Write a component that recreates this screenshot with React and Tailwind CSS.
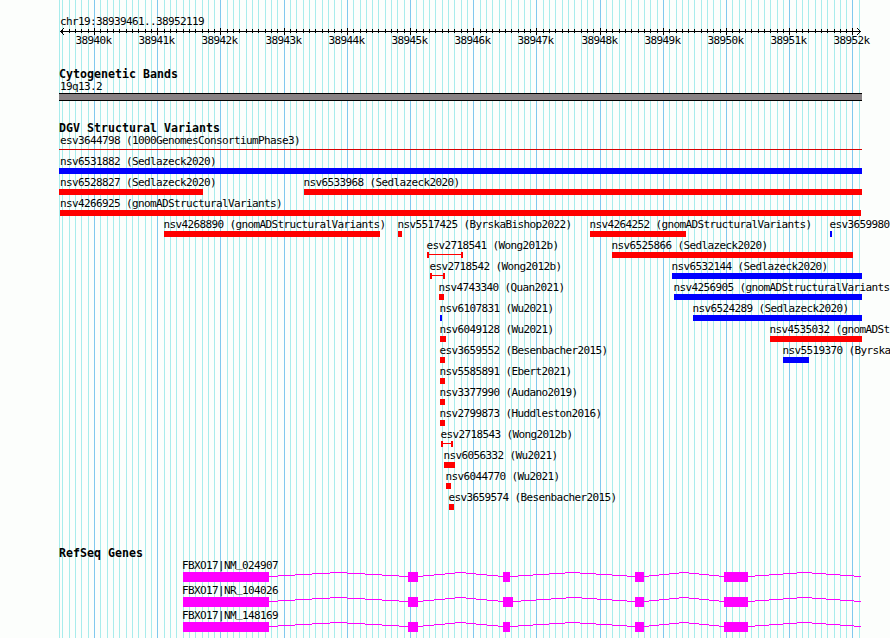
const RED = '#ff0000'
const BLUE = '#0000ff'
const MAGENTA = '#ff00ff'

const REGION = { chrom: 'chr19', start: 38939461, end: 38952119 }
const PX_PER_BP = 0.0632
const LEFT = 59
const RIGHT = 862

const toX = (bp) => Math.round(60 + (bp - REGION.start) * PX_PER_BP)

// one mark every 100 bp, major every 1000 bp
const marks = []
for (let bp = 38939500; bp <= REGION.end; bp += 100) {
  marks.push({ bp, x: toX(bp), major: bp % 1000 === 0 })
}

// each row: [label, start, end, color, label x, kind]
const variantRows = [
  [['esv3644798 (1000GenomesConsortiumPhase3)', 59, 862, '#d80000', 60, 'line']],
  [['nsv6531882 (Sedlazeck2020)', 59, 862, BLUE, 60]],
  [
    ['nsv6528827 (Sedlazeck2020)', 59, 203, RED, 60],
    ['nsv6533968 (Sedlazeck2020)', 304, 862, RED, 303.4]
  ],
  [['nsv4266925 (gnomADStructuralVariants)', 60, 861, RED, 60]],
  [
    ['nsv4268890 (gnomADStructuralVariants)', 164, 380, RED, 163.4],
    ['nsv5517425 (ByrskaBishop2022)', 398, 402, RED, 397.4],
    ['nsv4264252 (gnomADStructuralVariants)', 590, 686, RED, 589.4],
    ['esv3659980', 830, 832, BLUE, 829.4]
  ],
  [
    ['esv2718541 (Wong2012b)', 427, 463, RED, 426.4, 'span'],
    ['nsv6525866 (Sedlazeck2020)', 612, 853, RED, 611.4]
  ],
  [
    ['esv2718542 (Wong2012b)', 430, 445, RED, 429.4, 'span'],
    ['nsv6532144 (Sedlazeck2020)', 672, 862, BLUE, 671.4]
  ],
  [
    ['nsv4743340 (Quan2021)', 439, 444, RED, 438.4],
    ['nsv4256905 (gnomADStructuralVariants)', 674, 862, BLUE, 673.4]
  ],
  [
    ['nsv6107831 (Wu2021)', 440, 442, BLUE, 439.4],
    ['nsv6524289 (Sedlazeck2020)', 693, 862, BLUE, 692.4]
  ],
  [
    ['nsv6049128 (Wu2021)', 440, 446, RED, 439.4],
    ['nsv4535032 (gnomADStructuralVariants)', 770, 862, RED, 769.4]
  ],
  [
    ['esv3659552 (Besenbacher2015)', 440, 445, RED, 439.4],
    ['nsv5519370 (ByrskaBishop2022)', 783, 809, BLUE, 782.4]
  ],
  [['nsv5585891 (Ebert2021)', 440, 445, RED, 439.4]],
  [['nsv3377990 (Audano2019)', 440, 445, RED, 439.4]],
  [['nsv2799873 (Huddleston2016)', 440, 445, RED, 439.4]],
  [['esv2718543 (Wong2012b)', 441, 453, RED, 440.4, 'span']],
  [['nsv6056332 (Wu2021)', 444, 455, RED, 443.4]],
  [['nsv6044770 (Wu2021)', 446, 451, RED, 445.4]],
  [['esv3659574 (Besenbacher2015)', 449, 454, RED, 448.4]]
]

const genes = [
  { label: ['FBXO17|NM', '024907'], exons: [[183, 269], [408, 418], [503, 510], [635, 644], [724, 748]] },
  { label: ['FBXO17|NR', '104026'], exons: [[183, 269], [408, 418], [503, 513], [635, 644], [724, 748]] },
  { label: ['FBXO17|NM', '148169'], exons: [[183, 269], [408, 418], [503, 510], [635, 644], [724, 748]] }
]

function Label({ x, y, children }) {
  return (
    <text
      x={x}
      y={y}
      className="text-[11px] tracking-[-0.622px] fill-black whitespace-pre"
    >
      {children}
    </text>
  )
}

function Canvas({ height, children }) {
  return (
    <svg width="890" height={height} className="block" shapeRendering="crispEdges">
      {children}
    </svg>
  )
}

function TrackTitle({ children }) {
  return (
    <h2 className="h-[18px] pt-1.5 pl-[59px] text-[11.6px] leading-3 tracking-[0.016px] font-bold whitespace-nowrap">
      {children}
    </h2>
  )
}

function GridLines() {
  return (
    <svg
      width="890"
      height="638"
      className="absolute inset-0"
      shapeRendering="crispEdges"
    >
      <rect x={LEFT} y="0" width="1" height="638" fill="#a8ecec" />
      {marks.map(m => (
        <rect
          key={m.bp}
          x={m.x}
          y="0"
          width="1"
          height="638"
          fill={m.major ? '#80c8ee' : '#a8ecec'}
        />
      ))}
    </svg>
  )
}

function Ruler() {
  return (
    <Canvas height={62}>
      <Label x={60} y={25}>
        {`${REGION.chrom}:${REGION.start}..${REGION.end}`}
      </Label>
      <rect x="60" y="31" width="801" height="1" />
      {/* arrow heads */}
      {[1, 2, 3].map(i => (
        <g key={i}>
          <rect x={60 + i} y={31 - i} width="1" height="1" />
          <rect x={60 + i} y={31 + i} width="1" height="1" />
          <rect x={860 - i} y={31 - i} width="1" height="1" />
          <rect x={860 - i} y={31 + i} width="1" height="1" />
        </g>
      ))}
      {marks.filter(m => m.x < 857).map(m => (
        <rect
          key={m.bp}
          x={m.x}
          y={m.major ? 28 : 29}
          width="1"
          height={m.major ? 7 : 4}
        />
      ))}
      {marks.filter(m => m.major).map(m => (
        <Label key={m.bp} x={m.x - 18.5} y={44}>
          {`${m.bp / 1000}k`}
        </Label>
      ))}
    </Canvas>
  )
}

function Variant({ data }) {
  const [label, start, end, color, labelX, kind] = data
  return (
    <g>
      <Label x={labelX} y={10}>{label}</Label>
      {!kind && <rect x={start} y="13" width={end - start} height="6" fill={color} />}
      {kind && <rect x={start} y="15" width={end - start} height="1" fill={color} />}
      {kind === 'span' && (
        <>
          <rect x={start} y="13" width="2" height="6" fill={color} />
          <rect x={end - 2} y="13" width="2" height="6" fill={color} />
        </>
      )}
    </g>
  )
}

// Intron is a shallow hat, 4px high, drawn in 1px steps
function Intron({ from, to }) {
  const mid = (from + to) / 2
  const step = (mid - from) / 4
  const edges = [from]
  for (let i = 0; i < 4; i++) edges.push(Math.round(from + step * (i + 0.5)))
  for (let i = 3; i >= 0; i--) edges.push(Math.round(to - step * (i + 0.5)))
  edges.push(to)

  return edges.slice(0, -1).map((x, i) => (
    <rect
      key={i}
      x={x}
      y={13 + Math.abs(4 - i)}
      width={edges[i + 1] - x}
      height="1"
      fill={MAGENTA}
    />
  ))
}

function Gene({ gene }) {
  const [name, accession] = gene.label
  return (
    <Canvas height={25}>
      {gene.exons.map(([start, end], i) => (
        <g key={start}>
          <rect x={start} y="13" width={end - start} height="10" fill={MAGENTA} />
          <Intron from={end} to={gene.exons[i + 1]?.[0] ?? RIGHT - 1} />
        </g>
      ))}
      {/* underscore is lifted so it stays clear of the exon */}
      <Label x={182} y={10}>
        {name}<tspan dy="-2">_</tspan><tspan dy="2">{accession}</tspan>
      </Label>
    </Canvas>
  )
}

export default function App() {
  return (
    <div className="relative w-[890px] h-[638px] overflow-hidden bg-[#fcfefc] text-black font-['DejaVu_Sans_Mono',monospace]">
      <GridLines />

      <main className="relative flex flex-col">
        <Ruler />

        <section>
          <TrackTitle>Cytogenetic Bands</TrackTitle>
          <Canvas height={36}>
            <Label x={60} y={10}>19q13.2</Label>
            <rect x={LEFT} y="13" width={RIGHT - LEFT} height="8" />
            <rect x={LEFT} y="14" width={RIGHT - LEFT} height="6" fill="#888284" />
          </Canvas>
        </section>

        <section className="pb-[29px]">
          <TrackTitle>DGV Structural Variants</TrackTitle>
          {variantRows.map((row, i) => (
            <Canvas key={i} height={21}>
              {row.map(v => <Variant key={v[0]} data={v} />)}
            </Canvas>
          ))}
        </section>

        <section>
          <TrackTitle>RefSeq Genes</TrackTitle>
          {genes.map(g => <Gene key={g.label.join('_')} gene={g} />)}
        </section>
      </main>
    </div>
  )
}
